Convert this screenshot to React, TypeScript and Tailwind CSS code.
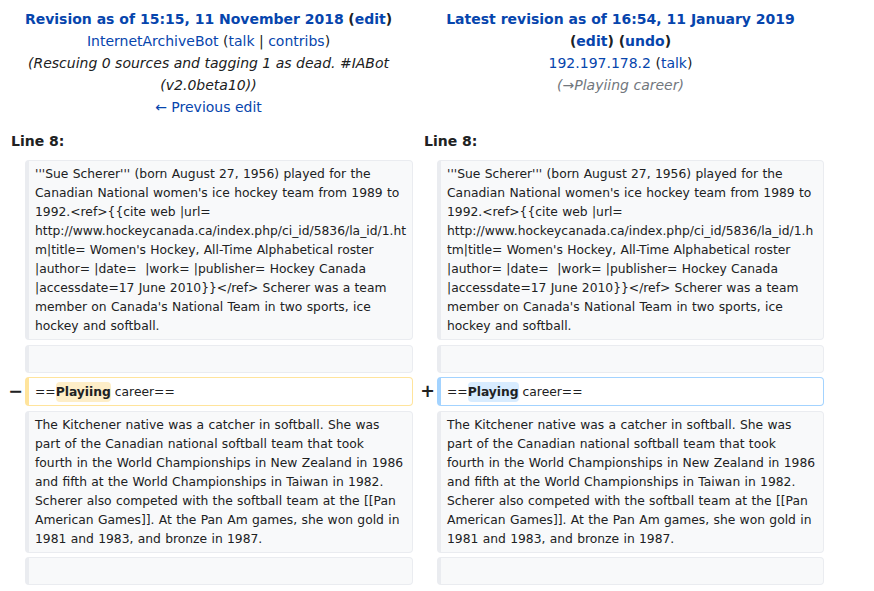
import React from "react";

const LINK = "text-[#0645ad]";

const p1Left = [
  "'''Sue Scherer''' (born August 27, 1956) played for the",
  "Canadian National women's ice hockey team from 1989 to",
  "1992.<ref>{{cite web |url=",
  "http://www.hockeycanada.ca/index.php/ci_id/5836/la_id/1.ht",
  "m|title= Women's Hockey, All-Time Alphabetical roster",
  "|author= |date=  |work= |publisher= Hockey Canada",
  "|accessdate=17 June 2010}}</ref> Scherer was a team",
  "member on Canada's National Team in two sports, ice",
  "hockey and softball.",
];

const p1Right = [
  "'''Sue Scherer''' (born August 27, 1956) played for the",
  "Canadian National women's ice hockey team from 1989 to",
  "1992.<ref>{{cite web |url=",
  "http://www.hockeycanada.ca/index.php/ci_id/5836/la_id/1.h",
  "tm|title= Women's Hockey, All-Time Alphabetical roster",
  "|author= |date=  |work= |publisher= Hockey Canada",
  "|accessdate=17 June 2010}}</ref> Scherer was a team",
  "member on Canada's National Team in two sports, ice",
  "hockey and softball.",
];

const p2 = [
  "The Kitchener native was a catcher in softball. She was",
  "part of the Canadian national softball team that took",
  "fourth in the World Championships in New Zealand in 1986",
  "and fifth at the World Championships in Taiwan in 1982.",
  "Scherer also competed with the softball team at the [[Pan",
  "American Games]]. At the Pan Am games, she won gold in",
  "1981 and 1983, and bronze in 1987.",
];

function Ctx({ lines }: { lines?: string[] }) {
  return (
    <div className="border border-[#eaecf0] border-l-4 rounded-[4px] bg-[#f8f9fa] pl-[6px] pr-[6px] pt-[4px] pb-[3px] text-[12.32px] leading-[19px] text-[#202122] whitespace-pre [word-spacing:0.4px] overflow-hidden">
      {lines && lines.length ? lines.map((l, i) => <div key={i}>{l}</div>) : <div>{"\u00a0"}</div>}
    </div>
  );
}

function Marker({ sign }: { sign?: string }) {
  return (
    <div className="flex items-center justify-end -mr-[2px] font-bold text-[17.5px] leading-[21px] text-[#202122]">
      {sign ?? ""}
    </div>
  );
}

function Changed({ word, border, hl }: { word: string; border: string; hl: string }) {
  return (
    <div className={`border ${border} border-l-4 rounded-[4px] bg-white pl-[6px] pr-[6px] pt-[4px] pb-[3px] h-[29px] text-[12.32px] leading-[20px] text-[#202122] whitespace-pre flex items-center`}>
      <span>==</span>
      <span className={`rounded-[4px] ${hl} font-bold leading-[20px] h-[20px]`}>{word}</span>
      <span>{" career=="}</span>
    </div>
  );
}

export default function App() {
  return (
    <div className="w-[874px] h-[591px] bg-white font-['DejaVu_Sans',sans-serif] text-[#202122] overflow-hidden">
      <div className="grid grid-cols-[17px_388px_16px_387px] gap-x-[4px] px-[4px]">
        {/* Headers */}
        <div className="col-span-2 text-center text-[14px] leading-[22px] px-[7px] pt-[8px] pb-[12px]">
          <div>
            <span className={`font-bold ${LINK}`}>Revision as of 15:15, 11 November 2018</span>{" "}
            <span className="font-bold">
              (<span className={LINK}>edit</span>)
            </span>
          </div>
          <div>
            <span className={LINK}>InternetArchiveBot</span> (
            <span className={LINK}>talk</span> | <span className={LINK}>contribs</span>)
          </div>
          <div className="italic">(Rescuing 0 sources and tagging 1 as dead. #IABot (v2.0beta10))</div>
          <div className={LINK}>← Previous edit</div>
        </div>
        <div className="col-span-2 text-center text-[14px] leading-[22px] px-[7px] pt-[8px] pb-[12px]">
          <div>
            <span className={`font-bold ${LINK}`}>Latest revision as of 16:54, 11 January 2019</span>
          </div>
          <div className="font-bold">
            (<span className={LINK}>edit</span>) (<span className={LINK}>undo</span>)
          </div>
          <div>
            <span className={LINK}>192.197.178.2</span> (<span className={LINK}>talk</span>)
          </div>
          <div className="italic text-[#72777d]">(→Playiing career)</div>
        </div>

        {/* Line numbers */}
        <div className="col-span-2 font-bold text-[14px] leading-[22px] px-[7px] pb-[8px]">Line 8:</div>
        <div className="col-span-2 font-bold text-[14px] leading-[22px] px-[7px] pb-[8px]">Line 8:</div>

        <div className="col-span-4 grid grid-cols-[17px_388px_16px_387px] gap-x-[4px] gap-y-[4.6px]">
          <Marker />
          <Ctx lines={p1Left} />
          <Marker />
          <Ctx lines={p1Right} />

          <Marker />
          <Ctx />
          <Marker />
          <Ctx />

          <Marker sign="−" />
          <Changed word="Playiing" border="border-[#ffe49c]" hl="bg-[#feeec8]" />
          <Marker sign="+" />
          <Changed word="Playing" border="border-[#a3d3ff]" hl="bg-[#d8ecff]" />

          <Marker />
          <Ctx lines={p2} />
          <Marker />
          <Ctx lines={p2} />

          <Marker />
          <Ctx />
          <Marker />
          <Ctx />
        </div>
      </div>
    </div>
  );
}
